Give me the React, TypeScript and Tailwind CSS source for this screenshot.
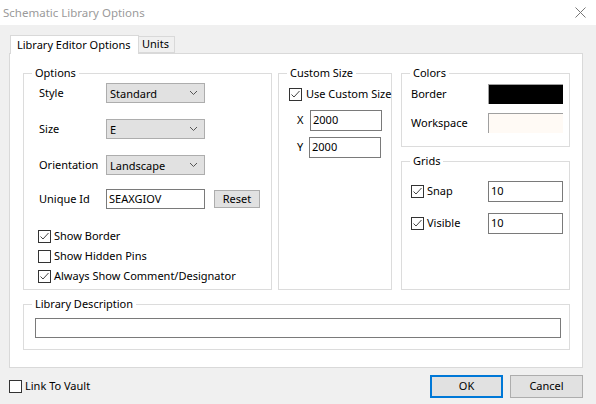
import React from 'react';

const font = { fontFamily: '"Noto Sans", "Open Sans", sans-serif' };

function Check({ checked }: { checked?: boolean }) {
  return (
    <span className="flex h-[13px] w-[13px] shrink-0 items-center justify-center border border-[#333] bg-white">
      {checked && (
        <svg width="11" height="11" viewBox="0 0 11 11">
          <polyline points="1.5,5.5 4,8 9.5,2" fill="none" stroke="#444" strokeWidth="1" />
        </svg>
      )}
    </span>
  );
}

function Chevron() {
  return (
    <svg width="9" height="6" viewBox="0 0 9 6">
      <polyline points="1,1 4.5,4.5 8,1" fill="none" stroke="#555" strokeWidth="1" />
    </svg>
  );
}

function Select({ value }: { value: string }) {
  return (
    <div className="flex h-[20px] w-[99px] items-center justify-between border border-[#adadad] bg-[#e1e1e1] pl-[3px] pr-[6px]">
      <span className="leading-none">{value}</span>
      <Chevron />
    </div>
  );
}

function Group({ title, className, children }: { title: string; className?: string; children?: React.ReactNode }) {
  return (
    <div className={`relative border border-[#dcdcdc] ${className ?? ''}`}>
      <span className="absolute -top-[9px] left-[8px] whitespace-nowrap bg-white px-[3px] leading-[16px]">{title}</span>
      {children}
    </div>
  );
}

function TextBox({ value, className }: { value?: string; className?: string }) {
  return (
    <div className={`flex items-start border border-[#7a7a7a] bg-white pl-[2px] leading-[17px] ${className ?? ''}`}>
      {value}
    </div>
  );
}

export default function App() {
  return (
    <div className="flex h-[404px] w-[596px] flex-col whitespace-nowrap bg-[#f0f0f0] text-[11px] text-black" style={font}>
      {/* title bar */}
      <div className="flex h-[25px] items-center justify-between bg-white pl-[3px] pr-[10px]">
        <span className="text-[11.5px] text-[#9a9a9a]">Schematic Library Options</span>
        <svg width="11" height="11" viewBox="0 0 11 11">
          <path d="M0.5 0.5 L10.5 10.5 M10.5 0.5 L0.5 10.5" stroke="#777" strokeWidth="1" />
        </svg>
      </div>

      {/* tabs */}
      <div className="ml-[10px] mt-[10px] flex items-end">
        <div className="relative z-10 -mb-px flex h-[19px] w-[129px] items-center border border-b-0 border-[#d9d9d9] bg-white pl-[6px]">
          Library Editor Options
        </div>
        <div className="flex h-[17px] w-[36px] items-center border border-l-0 border-[#d9d9d9] bg-[#f0f0f0] pl-[3px]">
          Units
        </div>
      </div>

      {/* panel */}
      <div className="ml-[9px] h-[315px] w-[574px] border border-[#d9d9d9] bg-white pl-[13px] pt-[19px]">
        <div className="flex">
          <Group title="Options" className="h-[217px] w-[249px]">
            <div className="flex flex-col pl-[15px] pt-[9px]">
              <div className="flex h-[20px] items-center">
                <span className="w-[67px]">Style</span>
                <Select value="Standard" />
              </div>
              <div className="mt-[16px] flex h-[20px] items-center">
                <span className="w-[67px]">Size</span>
                <Select value="E" />
              </div>
              <div className="mt-[16px] flex h-[20px] items-center">
                <span className="w-[67px]">Orientation</span>
                <Select value="Landscape" />
              </div>
              <div className="mt-[14px] flex h-[20px] items-center">
                <span className="w-[67px]">Unique Id</span>
                <TextBox value="SEAXGIOV" className="h-[20px] w-[99px]" />
                <div className="ml-[9px] flex h-[18px] w-[46px] items-center justify-center border border-[#adadad] bg-[#e1e1e1]">
                  Reset
                </div>
              </div>
              <div className="mt-[17px] flex flex-col">
                <div className="-ml-px flex h-[20px] items-center gap-[3px]">
                  <Check checked />
                  <span>Show Border</span>
                </div>
                <div className="-ml-px flex h-[20px] items-center gap-[3px]">
                  <Check />
                  <span>Show Hidden Pins</span>
                </div>
                <div className="-ml-px flex h-[20px] items-center gap-[3px]">
                  <Check checked />
                  <span>Always Show Comment/Designator</span>
                </div>
              </div>
            </div>
          </Group>

          <Group title="Custom Size" className="ml-[6px] h-[217px] w-[114px]">
            <div className="flex flex-col pl-[10px] pt-[14px]">
              <div className="flex h-[13px] items-center gap-[4px]">
                <Check checked />
                <span>Use Custom Size</span>
              </div>
              <div className="mt-[9px] flex items-center">
                <span className="w-[21px] pl-[8px]">X</span>
                <TextBox value="2000" className="h-[21px] w-[72px]" />
              </div>
              <div className="mt-[6px] flex items-center">
                <span className="w-[20px] pl-[8px]">Y</span>
                <TextBox value="2000" className="h-[21px] w-[72px]" />
              </div>
            </div>
          </Group>

          <div className="ml-[9px] flex w-[169px] flex-col">
            <Group title="Colors" className="h-[74px]">
              <div className="flex flex-col pl-[9px] pt-[10px]">
                <div className="flex h-[20px] items-center">
                  <span className="w-[77px]">Border</span>
                  <div className="h-[20px] w-[75px] border-l border-t border-[#a0a0a0] bg-black" />
                </div>
                <div className="mt-[9px] flex h-[20px] items-center">
                  <span className="w-[77px]">Workspace</span>
                  <div className="h-[20px] w-[75px] border-l border-t border-[#a0a0a0] bg-[#fffaf5]" />
                </div>
              </div>
            </Group>
            <Group title="Grids" className="mt-[14px] h-[129px]">
              <div className="flex flex-col pl-[9px] pt-[19px]">
                <div className="flex h-[21px] items-center">
                  <span className="flex w-[77px] items-center gap-[3px]">
                    <Check checked />
                    <span>Snap</span>
                  </span>
                  <TextBox value="10" className="h-[21px] w-[75px]" />
                </div>
                <div className="mt-[11px] flex h-[21px] items-center">
                  <span className="flex w-[77px] items-center gap-[3px]">
                    <Check checked />
                    <span>Visible</span>
                  </span>
                  <TextBox value="10" className="h-[21px] w-[75px]" />
                </div>
              </div>
            </Group>
          </div>
        </div>

        <Group title="Library Description" className="mt-[14px] h-[46px] w-[547px]">
          <div className="pl-[11px] pt-[13px]">
            <TextBox className="h-[20px] w-[526px]" />
          </div>
        </Group>
      </div>

      {/* footer */}
      <div className="ml-[9px] mt-[7px] flex items-center">
        <div className="flex items-center gap-[3px]">
          <Check />
          <span>Link To Vault</span>
        </div>
        <div className="ml-auto mr-[13px] flex gap-[7px]">
          <div className="flex h-[23px] w-[73px] items-center justify-center border-2 border-[#0078d7] bg-[#e1e1e1]">
            OK
          </div>
          <div className="flex h-[23px] w-[73px] items-center justify-center border border-[#adadad] bg-[#e1e1e1]">
            Cancel
          </div>
        </div>
      </div>
    </div>
  );
}
